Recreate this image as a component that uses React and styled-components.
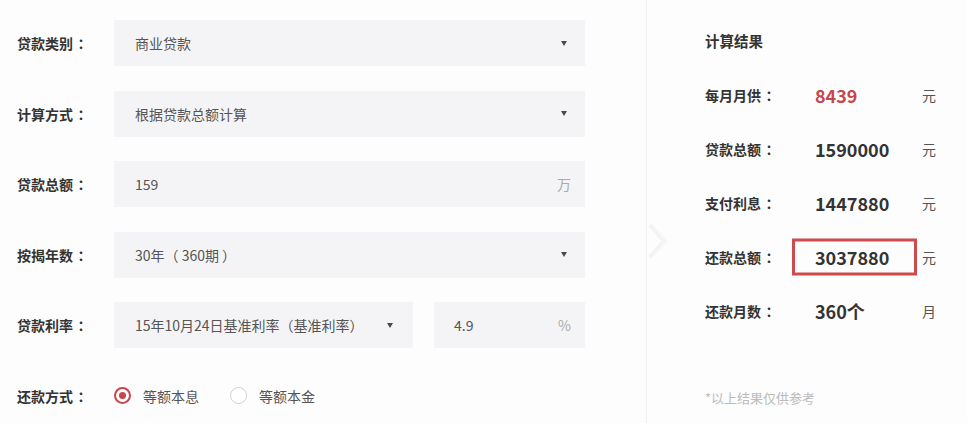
import React from "react";
import styled, { createGlobalStyle } from "styled-components";

const Global = createGlobalStyle`
  html, body { margin: 0; padding: 0; background: #fdfdfd; }
  body { font-family: "Noto Sans CJK SC", "Noto Sans", sans-serif; color: #333; }
  * { box-sizing: border-box; }
`;

const Page = styled.div`
  position: relative;
  display: flex;
  width: 967px;
  height: 423px;
  overflow: hidden;
  background: #fdfdfd;
`;

const FormPanel = styled.div`
  width: 647px;
  border-right: 1px solid #efefef;
  padding: 20px 0 0 17px;
  display: flex;
  flex-direction: column;
  gap: 24.5px;
`;

const FormRow = styled.div`
  display: flex;
  align-items: center;
  height: 46px;
`;

const Label = styled.div`
  width: 97px;
  font-size: 14px;
  font-weight: 700;
  color: #333;
  white-space: nowrap;
`;

const Colon = styled.span`
  font-family: "Noto Sans CJK TC", "Noto Sans CJK SC", sans-serif;
  margin-left: 1px;
`;

const Fields = styled.div`
  display: flex;
  gap: 21px;
  width: 471px;
  height: 100%;
`;

const Box = styled.div`
  flex: ${(p) => (p.$w ? `0 0 ${p.$w}px` : "1")};
  height: 100%;
  background: #f4f4f6;
  display: flex;
  align-items: center;
  padding: 0 ${(p) => p.$pr || 18}px 0 ${(p) => p.$pl || 21}px;
  font-size: 14px;
  color: #555;
`;

const Value = styled.span`
  flex: 1;
  white-space: nowrap;
`;

const Caret = styled.span`
  width: 0;
  height: 0;
  border-left: 3.5px solid transparent;
  border-right: 3.5px solid transparent;
  border-top: 5px solid #4a4a4a;
`;

const Suffix = styled.span`
  color: #aaa;
  font-size: 14px;
`;

const RadioGroup = styled.div`
  display: flex;
  align-items: center;
  gap: 31px;
`;

const RadioItem = styled.label`
  display: flex;
  align-items: center;
  gap: 12px;
  font-size: 14px;
  color: #555;
`;

const RadioDot = styled.span`
  width: 17px;
  height: 17px;
  border-radius: 50%;
  border: ${(p) => (p.$on ? "2px solid #c4474a" : "1.5px solid #cfcfcf")};
  background: #fff;
  display: flex;
  align-items: center;
  justify-content: center;
  &::after {
    content: "";
    width: 7px;
    height: 7px;
    border-radius: 50%;
    background: ${(p) => (p.$on ? "#c4474a" : "transparent")};
  }
`;

const ResultPanel = styled.div`
  flex: 1;
  padding: 31px 0 0 58px;
  display: flex;
  flex-direction: column;
`;

const Title = styled.div`
  font-size: 14.5px;
  font-weight: 700;
  line-height: 20px;
  color: #333;
  margin-bottom: 17px;
`;

const ResultRow = styled.div`
  display: flex;
  align-items: center;
  height: 54px;
`;

const ResultLabel = styled.div`
  width: 110px;
  font-size: 14px;
  font-weight: 700;
  color: #333;
`;

const ResultValue = styled.div`
  position: relative;
  width: 107px;
  font-size: 18px;
  font-weight: 700;
  color: ${(p) => (p.$red ? "#c8454a" : "#333")};
`;

const Highlight = styled.span`
  position: absolute;
  left: -23px;
  top: 50%;
  transform: translateY(-50%);
  width: 125px;
  height: 37px;
  border: 3px solid #cf4a4d;
`;

const Unit = styled.div`
  font-size: 14px;
  color: #555;
`;

const Note = styled.div`
  margin-top: 50px;
  font-size: 13px;
  color: #bbb;
`;

const Chevron = styled.svg`
  position: absolute;
  left: 642px;
  top: 222px;
`;

const rows = [
  { label: "贷款类别", value: "商业贷款", caret: true },
  { label: "计算方式", value: "根据贷款总额计算", caret: true },
  { label: "贷款总额", value: "159", suffix: "万" },
  { label: "按揭年数", value: "30年（ 360期 ）", caret: true },
];

const results = [
  { label: "每月月供", value: "8439", unit: "元", red: true },
  { label: "贷款总额", value: "1590000", unit: "元" },
  { label: "支付利息", value: "1447880", unit: "元" },
  { label: "还款总额", value: "3037880", unit: "元", boxed: true },
  { label: "还款月数", value: "360个", unit: "月" },
];

export default function App() {
  return (
    <>
      <Global />
      <Page>
        <FormPanel>
          {rows.map((r) => (
            <FormRow key={r.label}>
              <Label>
                {r.label}
                <Colon>：</Colon>
              </Label>
              <Fields>
                <Box $pr={r.suffix ? 14 : 18}>
                  <Value>{r.value}</Value>
                  {r.caret && <Caret />}
                  {r.suffix && <Suffix>{r.suffix}</Suffix>}
                </Box>
              </Fields>
            </FormRow>
          ))}
          <FormRow>
            <Label>
              贷款利率<Colon>：</Colon>
            </Label>
            <Fields>
              <Box $w={299} $pr={20}>
                <Value>15年10月24日基准利率（基准利率）</Value>
                <Caret />
              </Box>
              <Box $pl={20} $pr={14}>
                <Value>4.9</Value>
                <Suffix>%</Suffix>
              </Box>
            </Fields>
          </FormRow>
          <FormRow>
            <Label>
              还款方式<Colon>：</Colon>
            </Label>
            <RadioGroup>
              <RadioItem>
                <RadioDot $on />
                等额本息
              </RadioItem>
              <RadioItem>
                <RadioDot />
                等额本金
              </RadioItem>
            </RadioGroup>
          </FormRow>
        </FormPanel>
        <ResultPanel>
          <Title>计算结果</Title>
          {results.map((r) => (
            <ResultRow key={r.label}>
              <ResultLabel>
                {r.label}
                <Colon>：</Colon>
              </ResultLabel>
              <ResultValue $red={r.red}>
                {r.boxed && <Highlight />}
                {r.value}
              </ResultValue>
              <Unit>{r.unit}</Unit>
            </ResultRow>
          ))}
          <Note>*以上结果仅供参考</Note>
        </ResultPanel>
        <Chevron width="32" height="38" viewBox="0 0 32 38">
          <polyline points="8,3 22,19 8,35" fill="none" stroke="#f3f3f3" strokeWidth="4" />
          <polyline points="12,5 25,19 12,33" fill="none" stroke="#f8f8f8" strokeWidth="2" />
        </Chevron>
      </Page>
    </>
  );
}
